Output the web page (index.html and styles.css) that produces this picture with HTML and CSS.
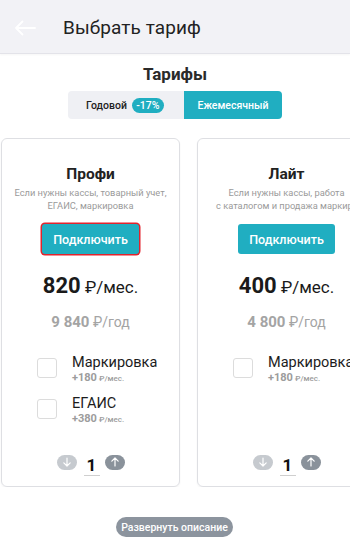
FILE: index.html
```html
<!DOCTYPE html>
<html lang="ru">
<head>
<meta charset="utf-8">
<link rel="stylesheet" href="styles.css">
</head>
<body>
<header class="topbar">
  <svg class="back" width="22" height="16" viewBox="0 0 22 16"><path d="M21 8H2M8.5 1.5L2 8l6.5 6.5" fill="none" stroke="#ffffff" stroke-width="1.8" stroke-linecap="round" stroke-linejoin="round"/></svg>
  <div class="title">Выбрать тариф</div>
</header>
<main class="content">
  <h2 class="heading">Тарифы</h2>
  <div class="toggle">
    <div class="opt opt-year">Годовой <span class="badge">-17%</span></div>
    <div class="opt opt-month">Ежемесячный</div>
  </div>
  <div class="cards">
    <div class="card">
      <div class="name">Профи</div>
      <div class="desc">Если нужны кассы, товарный учет,<br>ЕГАИС, маркировка</div>
      <button class="btn btn-focus">Подключить</button>
      <div class="price"><b>820</b> ₽/мес.</div>
      <div class="year"><b>9 840</b> ₽/год</div>
      <div class="opts">
        <div class="row"><span class="check"></span><div class="rtext"><div class="rname">Маркировка</div><div class="rsub"><b>+180</b> ₽/мес.</div></div></div>
        <div class="row"><span class="check"></span><div class="rtext"><div class="rname">ЕГАИС</div><div class="rsub"><b>+380</b> ₽/мес.</div></div></div>
      </div>
      <div class="stepper">
        <span class="step step-down"><svg width="10" height="10" viewBox="0 0 10 10"><path d="M5 1v8M1.8 5.8L5 9l3.2-3.2" fill="none" stroke="#fff" stroke-width="1.2" stroke-linecap="round" stroke-linejoin="round"/></svg></span>
        <span class="num">1</span>
        <span class="step step-up"><svg width="10" height="10" viewBox="0 0 10 10"><path d="M5 9V1M1.8 4.2L5 1l3.2 3.2" fill="none" stroke="#fff" stroke-width="1.2" stroke-linecap="round" stroke-linejoin="round"/></svg></span>
      </div>
    </div>
    <div class="card">
      <div class="name">Лайт</div>
      <div class="desc desc-wide">Если нужны кассы, работа<br>с каталогом и продажа маркировки</div>
      <button class="btn">Подключить</button>
      <div class="price"><b>400</b> ₽/мес.</div>
      <div class="year"><b>4 800</b> ₽/год</div>
      <div class="opts">
        <div class="row"><span class="check"></span><div class="rtext"><div class="rname">Маркировка</div><div class="rsub"><b>+180</b> ₽/мес.</div></div></div>
      </div>
      <div class="stepper">
        <span class="step step-down"><svg width="10" height="10" viewBox="0 0 10 10"><path d="M5 1v8M1.8 5.8L5 9l3.2-3.2" fill="none" stroke="#fff" stroke-width="1.2" stroke-linecap="round" stroke-linejoin="round"/></svg></span>
        <span class="num">1</span>
        <span class="step step-up"><svg width="10" height="10" viewBox="0 0 10 10"><path d="M5 9V1M1.8 4.2L5 1l3.2 3.2" fill="none" stroke="#fff" stroke-width="1.2" stroke-linecap="round" stroke-linejoin="round"/></svg></span>
      </div>
    </div>
  </div>
  <div class="expand-wrap"><button class="expand">Развернуть описание</button></div>
</main>
</body>
</html>
```
FILE: styles.css
```css
* { box-sizing: border-box; }
html, body { margin: 0; padding: 0; }
body {
  width: 350px;
  height: 551px;
  overflow: hidden;
  background: #ffffff;
  font-family: Roboto, "Noto Sans", "Liberation Sans", sans-serif;
  color: #1e1e1e;
}
.topbar {
  height: 54px;
  background: #f2f2f6;
  border-bottom: 1px solid #e3e3e9;
  box-shadow: 0 1px 2px rgba(0,0,0,0.04);
  display: flex;
  align-items: center;
  padding-left: 14px;
}
.back { margin-top: 2px; }
.title {
  margin-left: 27px;
  font-size: 19px;
  color: #222;
  letter-spacing: 0.1px;
  margin-top: 1px;
}
.content { display: flex; flex-direction: column; }
.heading {
  margin: 10px 0 0;
  text-align: center;
  font-size: 17px;
  line-height: 20px;
  font-weight: 700;
  color: #2a2a2a;
}
.toggle {
  margin: 7px auto 0;
  width: 214px;
  height: 28px;
  display: flex;
  border-radius: 4px;
  overflow: hidden;
}
.opt {
  flex: 1;
  display: flex;
  align-items: center;
  font-size: 10.5px;
  font-weight: 500;
}
.opt-year {
  background: #eff0f4;
  color: #222;
  padding-left: 18px;
}
.badge {
  margin-left: 5px;
  background: #20aec1;
  color: #fff;
  border-radius: 8px;
  height: 15px;
  width: 32px;
  display: inline-flex;
  align-items: center;
  justify-content: center;
  font-size: 10.5px;
}
.opt-month {
  background: #20aec1;
  color: #fff;
  justify-content: center;
}
.cards {
  margin-top: 19px;
  display: flex;
  gap: 17px;
  padding-left: 1px;
  overflow: hidden;
}
.card {
  flex: 0 0 179px;
  width: 179px;
  min-width: 0;
  height: 349px;
  border: 1px solid #dedfe3;
  border-radius: 6px;
  display: flex;
  flex-direction: column;
  align-items: center;
  padding: 25px 0 12px;
  box-shadow: 0 1px 2px rgba(0,0,0,0.05);
}
.name {
  font-size: 15.5px;
  line-height: 20px;
  font-weight: 700;
  color: #222;
}
.desc {
  margin-top: 2px;
  font-size: 9.3px;
  line-height: 13px;
  color: #9a9a9a;
  text-align: center;
  white-space: nowrap;
}
.desc-wide {
  align-self: stretch;
  min-width: 0;
  padding: 0 18px;
}
.btn {
  margin-top: 12px;
  width: 97px;
  height: 30px;
  border: none;
  border-radius: 3px;
  background: #20aec1;
  color: #fff;
  font-family: inherit;
  font-size: 12.5px;
  font-weight: 500;
  padding: 0;
}
.btn-focus { box-shadow: 0 0 0 1.5px #e3232c; }
.price {
  margin-top: 19px;
  line-height: 26px;
  font-size: 17px;
  color: #1a1a1a;
}
.price b { font-size: 22px; font-weight: 700; }
.year {
  margin-top: 12px;
  line-height: 20px;
  font-size: 14px;
  color: #a4a4a4;
}
.year b { font-size: 15px; font-weight: 700; }
.opts {
  align-self: stretch;
  margin-top: 23px;
  display: flex;
  flex-direction: column;
  gap: 10px;
  padding-left: 35px;
}
.row { display: flex; align-items: flex-start; }
.check {
  width: 20px;
  height: 20px;
  border: 1px solid #dcdcdc;
  border-radius: 3px;
  margin-top: 3px;
  flex: 0 0 auto;
}
.rtext { margin-left: 15px; white-space: nowrap; }
.rname { font-size: 14.5px; line-height: 16px; color: #1c1c1c; }
.rsub { font-size: 8px; line-height: 14px; color: #9c9c9c; font-weight: 500; }
.rsub b { font-size: 11px; font-weight: 700; }
.stepper {
  margin-top: auto;
  height: 24px;
  display: flex;
  align-items: center;
}
.step {
  width: 20px;
  height: 15px;
  border-radius: 8px;
  display: inline-flex;
  align-items: center;
  justify-content: center;
}
.step-down { background: #c6cacf; }
.step-up { background: #8a929b; }
.num {
  margin: 6px 5px 0 7px;
  width: 16px;
  text-align: center;
  font-size: 17px;
  font-weight: 700;
  line-height: 20px;
  border-bottom: 1px solid #cfcfcf;
  color: #111;
}
.expand-wrap {
  margin-top: 30px;
  display: flex;
  justify-content: center;
  padding-right: 1px;
}
.expand {
  width: 117px;
  height: 20px;
  border: none;
  border-radius: 10px;
  background: #8c949e;
  color: #fff;
  font-family: inherit;
  font-size: 10.5px;
  font-weight: 500;
  padding: 0;
}
```
